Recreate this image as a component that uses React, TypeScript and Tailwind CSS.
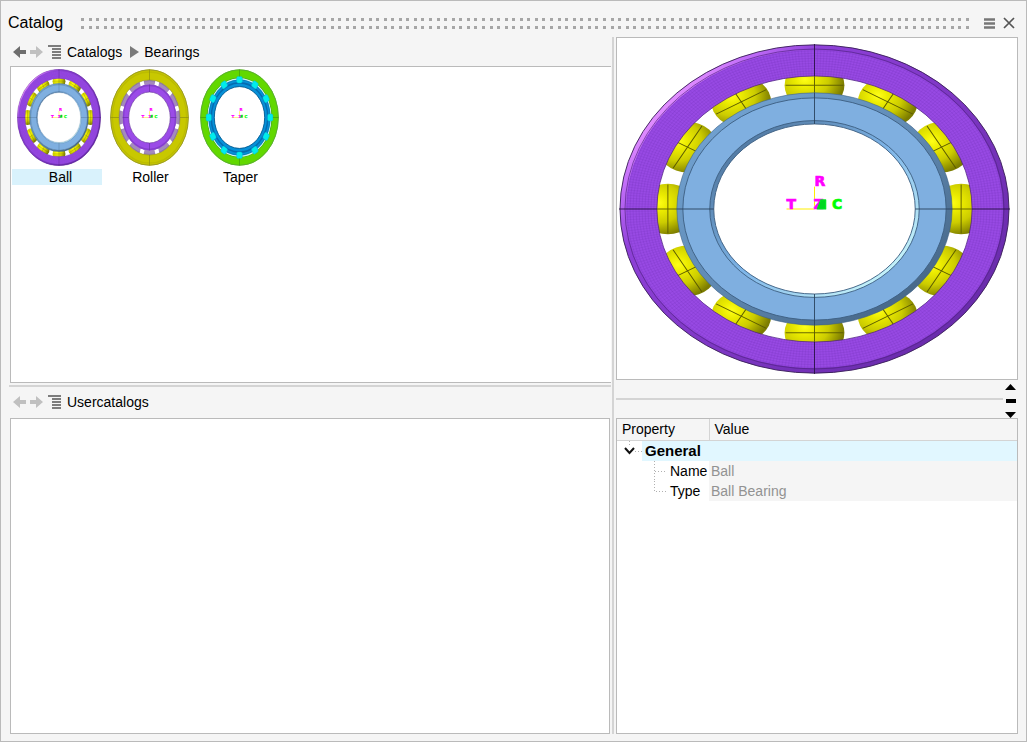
import { useId } from 'react';

type BearingKind = 'ball' | 'roller' | 'taper';

interface BearingProps {
  kind: BearingKind;
  width: number;
  height: number;
  fontSize: number;
  title: string;
}

const STEPS = Array.from({ length: 12 }, (_, i) => i * 30);
const MESH_RADII = Array.from({ length: 10 }, (_, i) => 161 + i * 3);
const GRIP_DOTS = Array.from({ length: 118 }, (_, i) => i);

function BallRings({ id }: { id: string }) {
  return (
    <>
      <defs>
        <radialGradient id={`${id}-ball`} cx="0.34" cy="0.38" r="0.66">
          <stop offset="0" stopColor="#ffff18" />
          <stop offset="0.25" stopColor="#ebeb00" />
          <stop offset="0.6" stopColor="#cccc00" />
          <stop offset="1" stopColor="#7c7c00" />
        </radialGradient>
        <linearGradient id={`${id}-rim`} gradientUnits="userSpaceOnUse" x1="-150" y1="-120" x2="150" y2="120">
          <stop offset="0" stopColor="#e08cff" />
          <stop offset="0.07" stopColor="#c06cf8" />
          <stop offset="0.2" stopColor="#8e40d8" />
          <stop offset="1" stopColor="#6a2cac" />
        </linearGradient>
        <linearGradient id={`${id}-edge`} gradientUnits="userSpaceOnUse" x1="-90" y1="-100" x2="90" y2="100">
          <stop offset="0" stopColor="#6f9fce" />
          <stop offset="0.5" stopColor="#5f89b3" />
          <stop offset="1" stopColor="#496a8b" />
        </linearGradient>
        <linearGradient id={`${id}-bore`} gradientUnits="userSpaceOnUse" x1="-75" y1="-75" x2="75" y2="75">
          <stop offset="0" stopColor="#537ba4" />
          <stop offset="0.5" stopColor="#7db4e8" />
          <stop offset="1" stopColor="#c4f2fa" />
        </linearGradient>
      </defs>
      {STEPS.map((angle) => {
        const rad = (angle * Math.PI) / 180;
        const x = Math.sin(rad) * 147;
        const y = -Math.cos(rad) * 147;
        return (
          <g key={angle} transform={`translate(${x} ${y})`}>
            <circle r="30" fill={`url(#${id}-ball)`} />
            <path
              d="M-29 0H29M0 -12V12"
              transform={`rotate(${angle})`}
              stroke="#5c5c00"
              strokeWidth="1"
            />
          </g>
        );
      })}
      <circle r="176" fill="none" stroke="#984ae4" strokeWidth="36" />
      {MESH_RADII.map((r) => (
        <circle key={r} r={r} fill="none" stroke="#6a2cb0" strokeWidth="1" opacity="0.22" />
      ))}
      <circle r="174" fill="none" stroke="#6a2cb0" strokeWidth="32" strokeDasharray="1 2" opacity="0.16" />
      <circle r="192" fill="none" stroke={`url(#${id}-rim)`} strokeWidth="6" />
      <circle r="190" fill="none" stroke="#4d2080" strokeWidth="1" opacity="0.7" />
      <circle r="195" fill="none" stroke="#3a2058" strokeWidth="1" />
      <circle r="158" fill="none" stroke="#4d2080" strokeWidth="1" opacity="0.8" />
      <circle r="118" fill="none" stroke="#7fafe0" strokeWidth="30" />
      <circle r="135" fill="none" stroke={`url(#${id}-edge)`} strokeWidth="6" />
      <circle r="132" fill="none" stroke="#3d5f82" strokeWidth="1" />
      <circle r="138" fill="none" stroke="#3d5f82" strokeWidth="1" opacity="0.6" />
      <circle r="103" fill="none" stroke={`url(#${id}-bore)`} strokeWidth="4" />
      <circle r="105" fill="none" stroke="#3d5f82" strokeWidth="1" />
      <circle r="101" fill="none" stroke="#3d5f82" strokeWidth="1" />
      <path d="M0 -196V-158M0 158V196M-196 0H-158M158 0H196" stroke="#2a1248" strokeWidth="1" />
      <path d="M0 -138V-101M0 101V138M-138 0H-101M101 0H138" stroke="#2c4560" strokeWidth="1" />
    </>
  );
}

function RollerRings() {
  return (
    <>
      <circle r="141" fill="none" stroke="#a48abc" strokeWidth="24" />
      <circle r="149" fill="none" stroke="#8c74a8" strokeWidth="4" />
      {STEPS.map((angle) => (
        <rect key={angle} x="-10" y="-152" width="20" height="20" fill="#fff" transform={`rotate(${angle + 15})`} />
      ))}
      <circle r="173" fill="none" stroke="#c8c800" strokeWidth="42" />
      <circle r="184" fill="none" stroke="#bcbc00" strokeWidth="6" />
      <circle r="193" fill="none" stroke="#94942c" strokeWidth="4" />
      <circle r="152" fill="none" stroke="#8c8c30" strokeWidth="2" />
      <circle r="118" fill="none" stroke="#9b4be8" strokeWidth="30" />
      <circle r="129" fill="none" stroke="#8440cc" strokeWidth="6" />
      <circle r="103" fill="none" stroke="#6a3a9c" strokeWidth="3" />
      <path d="M0 -194V-151M0 151V194M-194 0H-151M151 0H194" stroke="#8c8c10" strokeWidth="3" />
      <path d="M0 -133V-103M0 103V133M-133 0H-103M103 0H133" stroke="#6730a4" strokeWidth="3" />
    </>
  );
}

function TaperRings() {
  return (
    <>
      <circle r="176" fill="none" stroke="#62d800" strokeWidth="36" />
      <circle r="193" fill="none" stroke="#58a838" strokeWidth="4" />
      <circle r="160" fill="none" stroke="#3c9430" strokeWidth="3" />
      <circle r="156" fill="none" stroke="#d0f2f4" strokeWidth="5" />
      <circle r="139" fill="none" stroke="#0690d8" strokeWidth="30" />
      <circle r="140" fill="none" stroke="#046cb0" strokeWidth="7" />
      <circle r="152" fill="none" stroke="#0a78b0" strokeWidth="3" />
      <circle r="125" fill="none" stroke="#075c90" strokeWidth="4" />
      {STEPS.map((angle) => (
        <rect
          key={angle}
          x="-14"
          y="-166"
          width="28"
          height="27"
          rx="7"
          fill="#00ecec"
          stroke="#08b4d0"
          strokeWidth="2"
          transform={`rotate(${angle})`}
        />
      ))}
      <path d="M0 -194V-166M0 166V194M-194 0H-166M166 0H194" stroke="#3f9a10" strokeWidth="3" />
    </>
  );
}

function Bearing({ kind, width, height, fontSize, title }: BearingProps) {
  const id = useId();
  const cx = width / 2;
  const cy = height / 2;
  const em = fontSize;

  return (
    <svg
      width={width}
      height={height}
      viewBox={`0 0 ${width} ${height}`}
      className="shrink-0"
      role="img"
      aria-label={title}
    >
      <svg width={width} height={height} viewBox="-196 -196 392 392" preserveAspectRatio="none">
        {kind === 'ball' && <BallRings id={id} />}
        {kind === 'roller' && <RollerRings />}
        {kind === 'taper' && <TaperRings />}
      </svg>
      <path d={`M${cx} ${cy - em * 1.6}V${cy}H${cx - em * 2}`} fill="none" stroke="#ffee00" strokeWidth={em > 8 ? 1 : 0.5} />
      <g
        fontFamily="'DejaVu Sans', sans-serif"
        fontWeight="bold"
        fontSize={em}
        stroke="#ff00ff"
        strokeWidth={em / 20}
      >
        <text x={cx} y={cy - em * 1.65} fill="#ff00ff">R</text>
        <text x={cx - em * 2} y={cy} fill="#ff00ff">T</text>
        <text x={cx - 1} y={cy} fill="#ff00ff">Z</text>
        <text x={cx + em * 1.25} y={cy} fill="#00ff00" stroke="#00ff00">C</text>
      </g>
      {/* axis pointing at the viewer */}
      <path
        d={`M${cx + em * 0.2} ${cy}L${cx + em * 0.45} ${cy - em * 0.65}H${cx + em * 0.8}V${cy}Z`}
        fill="#00d820"
        stroke="#00e820"
        strokeWidth={em / 12}
        strokeLinejoin="round"
      />
    </svg>
  );
}

function ArrowIcon({ flip, color }: { flip?: boolean; color: string }) {
  return (
    <svg width="13" height="12" viewBox="0 0 13 12" className={flip ? 'rotate-180' : ''} aria-hidden="true">
      <path d="M0 6L7 0V4H13V8H7V12Z" fill={color} />
    </svg>
  );
}

function TreeIcon() {
  return (
    <svg width="14" height="14" viewBox="0 0 14 14" aria-hidden="true">
      <path d="M0 1H13M4 4H13M4 7H13M4 10H13M4 13H13" stroke="#555" strokeWidth="1.5" />
    </svg>
  );
}

function NavBar({ path, canGoBack }: { path: string[]; canGoBack?: boolean }) {
  return (
    <nav className="flex h-[29px] shrink-0 items-center pl-[3px]">
      <button type="button" aria-label="Back" disabled={!canGoBack}>
        <ArrowIcon color={canGoBack ? '#6e6e6e' : '#c0c0c0'} />
      </button>
      <button type="button" aria-label="Forward" className="ml-1" disabled>
        <ArrowIcon flip color="#c0c0c0" />
      </button>
      <button type="button" aria-label="Show tree" className="ml-[5px]">
        <TreeIcon />
      </button>
      {path.map((part, i) => (
        <span key={part} className="flex items-center">
          {i > 0 && (
            <svg width="9" height="12" viewBox="0 0 9 12" className="ml-2" aria-hidden="true">
              <path d="M0 0L9 6L0 12Z" fill="#7a7a7a" />
            </svg>
          )}
          <button type="button" className="ml-[5px]">{part}</button>
        </span>
      ))}
    </nav>
  );
}

const items: { kind: BearingKind; label: string; width: number; height: number }[] = [
  { kind: 'ball', label: 'Ball', width: 84, height: 97 },
  { kind: 'roller', label: 'Roller', width: 79, height: 97 },
  { kind: 'taper', label: 'Taper', width: 79, height: 97 },
];

function CatalogItems() {
  return (
    <div className="flex flex-wrap pl-px pt-[2px]">
      {items.map((item) => (
        <button key={item.kind} type="button" className="flex w-[90px] flex-col">
          <span className="flex h-[100px] w-full justify-center pl-1">
            <Bearing kind={item.kind} width={item.width} height={item.height} fontSize={4} title={item.label} />
          </span>
          <span className={`w-full pl-[7px] text-center leading-4 ${item.kind === 'ball' ? 'bg-[#d9f2fc]' : ''}`}>
            {item.label}
          </span>
        </button>
      ))}
    </div>
  );
}

function PropertyTable() {
  return (
    <div className="min-h-0 flex-1 border border-[#bababa] bg-white">
      <table className="w-full border-collapse text-left">
        <thead>
          <tr className="h-[21px] border-b border-[#d4d4d4] bg-[#f5f5f5] leading-5">
            <th className="w-[92px] border-r border-[#d4d4d4] py-0 pl-[5px] font-normal">Property</th>
            <th className="py-0 pl-[5px] font-normal">Value</th>
          </tr>
        </thead>
        <tbody>
          <tr className="h-5">
            <th colSpan={2} className="p-0">
              <div className="flex h-5">
                <button type="button" aria-label="Collapse General" className="flex w-[25px] items-center pl-[7px]">
                  <svg width="18" height="20" viewBox="0 0 18 20" aria-hidden="true">
                    <path d="M5.500 0V6M11 10.500H18" stroke="#b0b0b0" strokeDasharray="1 2" />
                    <path d="M1 7L5.500 12L10 7" fill="none" stroke="#111" strokeWidth="2" />
                  </svg>
                </button>
                <span className="flex-1 bg-[#e1f7ff] pl-[3px] text-[15px] font-bold leading-5">General</span>
              </div>
            </th>
          </tr>
          {[
            ['Name', 'Ball'],
            ['Type', 'Ball Bearing'],
          ].map(([name, value], i) => (
            <tr key={name} className="h-5">
              <th className="p-0 font-normal">
                <div className="flex h-5 pl-9 leading-5">
                  <svg width="14" height="20" viewBox="0 0 14 20" className="mr-[3px] shrink-0" aria-hidden="true">
                    <path d={i === 0 ? 'M1.500 0V20M2 10.500H14' : 'M1.500 0V10.500H14'} fill="none" stroke="#b0b0b0" strokeDasharray="1 2" />
                  </svg>
                  {name}
                </div>
              </th>
              <td className="bg-[#f5f5f5] py-0 pl-[2px] leading-5 text-[#929292]">{value}</td>
            </tr>
          ))}
        </tbody>
      </table>
    </div>
  );
}

export default function App() {
  return (
    <div className="flex h-screen flex-col border border-[#bababa] bg-[#f5f5f5] pb-[7px] pl-2 pr-2 font-['Liberation_Sans',Arial,sans-serif] text-sm text-black">
      <header className="flex h-9 shrink-0 items-center pt-2">
        <h1 className="-ml-px text-base">Catalog</h1>
        <div className="ml-[18px] mr-[14px] flex flex-1 flex-col gap-[5px]" aria-hidden="true">
          {[0, 1].map((row) => (
            <div key={row} className="flex justify-between">
              {GRIP_DOTS.map((dot) => (
                <span key={dot} className="h-[3px] w-[3px] bg-[#a6a6a6]" />
              ))}
            </div>
          ))}
        </div>
        <button type="button" aria-label="Menu">
          <svg width="11" height="11" viewBox="0 0 11 11" aria-hidden="true">
            <path d="M0 1.500H11M0 5.500H11M0 9.500H11" stroke="#777" strokeWidth="2.500" />
          </svg>
        </button>
        <button type="button" aria-label="Close" className="ml-2 mr-[3px]">
          <svg width="12" height="12" viewBox="0 0 12 12" aria-hidden="true">
            <path d="M1 1L11 11M11 1L1 11" stroke="#555" strokeWidth="1.700" />
          </svg>
        </button>
      </header>

      <main className="flex min-h-0 flex-1">
        <div className="flex min-w-0 flex-1 flex-col pl-px">
          <NavBar path={['Catalogs', 'Bearings']} canGoBack />
          <section className="min-h-0 flex-1 border border-r-0 border-[#bababa] bg-white">
            <CatalogItems />
          </section>
          <div className="-ml-px mt-[2px] h-[2px] shrink-0 bg-[#d4d4d4]" />
          <div className="flex h-[31px] shrink-0 items-center">
            <NavBar path={['Usercatalogs']} />
          </div>
          <section className="mr-px min-h-0 flex-1 border border-[#bababa] bg-white" />
        </div>

        <div className="ml-px mr-[2px] w-[2px] bg-[#d4d4d4]" />

        <aside className="flex w-[402px] shrink-0 flex-col">
          <section className="flex h-[343px] shrink-0 border border-[#bababa] bg-white pl-[2px] pt-[6px]">
            <Bearing kind="ball" width={391} height={330} fontSize={14} title="Ball bearing preview" />
          </section>
          <div className="flex h-[38px] shrink-0 items-center pr-[2px]">
            <div className="h-[2px] flex-1 bg-[#d4d4d4]" />
            <div className="ml-[2px] flex h-full w-[11px] flex-col items-center justify-between pt-1">
              <button type="button" aria-label="Expand preview">
                <svg width="11" height="6" viewBox="0 0 11 6" className="block"><path d="M0 6L5.500 0L11 6Z" /></svg>
              </button>
              <button type="button" aria-label="Reset split">
                <svg width="10" height="4" viewBox="0 0 10 4" className="block"><path d="M0 0H10V4H0Z" /></svg>
              </button>
              <button type="button" aria-label="Expand properties">
                <svg width="11" height="6" viewBox="0 0 11 6" className="block"><path d="M0 0L5.500 6L11 0Z" /></svg>
              </button>
            </div>
          </div>
          <PropertyTable />
        </aside>
      </main>
    </div>
  );
}
